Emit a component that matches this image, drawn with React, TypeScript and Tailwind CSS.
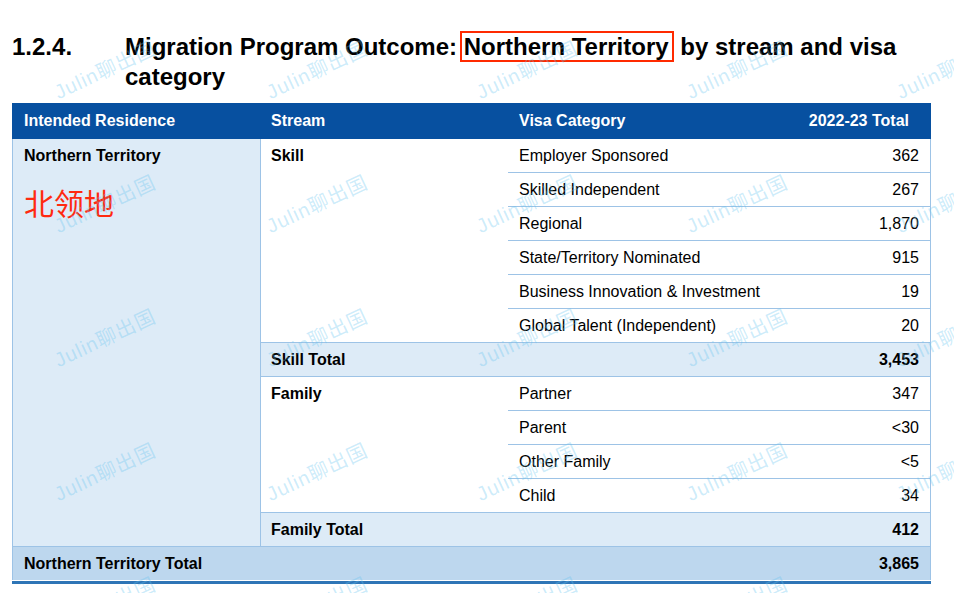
import React from "react";

const skillRows: [string, string][] = [
  ["Employer Sponsored", "362"],
  ["Skilled Independent", "267"],
  ["Regional", "1,870"],
  ["State/Territory Nominated", "915"],
  ["Business Innovation & Investment", "19"],
  ["Global Talent (Independent)", "20"],
];

const familyRows: [string, string][] = [
  ["Partner", "347"],
  ["Parent", "<30"],
  ["Other Family", "<5"],
  ["Child", "34"],
];

const marks = [70, 204, 338, 472, 606].flatMap((y) =>
  [105, 317, 527, 737, 947].map((x) => ({ x, y }))
);

const StreamGroup = ({ name, rows }: { name: string; rows: [string, string][] }) => (
  <div className="flex border-b border-[#9dc3e6]">
    <div className="w-[247px] shrink-0">
      <div className="h-[33px] flex items-center pl-[10px] font-bold">{name}</div>
    </div>
    <div className="flex-1 flex flex-col">
      {rows.map(([label, value]) => (
        <div
          key={label}
          className="h-[34px] last:h-[33px] flex items-center justify-between pl-[11px] pr-[11px] border-b last:border-b-0 border-[#9dc3e6]"
        >
          <span>{label}</span>
          <span>{value}</span>
        </div>
      ))}
    </div>
  </div>
);

const TotalRow = ({ label, value, last }: { label: string; value: string; last?: boolean }) => (
  <div
    className={
      last
        ? "h-[33px] flex items-center justify-between bg-[#ddebf7] pl-[10px] pr-[11px] font-bold"
        : "h-[34px] flex items-center justify-between bg-[#ddebf7] pl-[10px] pr-[11px] font-bold border-b border-[#9dc3e6]"
    }
  >
    <span>{label}</span>
    <span>{value}</span>
  </div>
);

export default function App() {
  return (
    <div className="relative w-[954px] h-[593px] overflow-hidden bg-white text-black font-['Liberation_Sans',Arial,sans-serif]">
      <div className="flex pt-[32px] text-[24px] leading-[30px] font-bold">
        <div className="w-[125px] shrink-0 pl-3">1.2.4.</div>
        <div className="flex-1 pr-[20px]">
          Migration Program Outcome:{" "}
          <span className="border-2 border-[#ff2a00] pl-[2px] pr-[3px] ml-[-4px]">Northern Territory</span>
          {" "}by stream and visa category
        </div>
      </div>

      <div className="ml-3 mt-[11px] w-[919px] text-[16px]">
        <div className="h-[36px] flex items-center bg-[#0750a0] text-white font-bold">
          <div className="w-[248px] pl-3">Intended Residence</div>
          <div className="w-[248px] pl-[11px]">Stream</div>
          <div className="flex-1 pl-[11px]">Visa Category</div>
          <div className="pr-[22px]">2022-23 Total</div>
        </div>

        <div className="flex border-l border-r border-b border-[#9dc3e6]">
          <div className="w-[248px] shrink-0 bg-[#ddebf7] border-r border-[#9dc3e6] pl-[11px]">
            <div className="h-[33px] flex items-center font-bold">Northern Territory</div>
            <div className="mt-[12px] text-[30px] leading-[36px] text-[#ff2a10] font-['Noto_Sans_CJK_SC',sans-serif]">
              北领地
            </div>
          </div>
          <div className="flex-1 flex flex-col">
            <StreamGroup name="Skill" rows={skillRows} />
            <TotalRow label="Skill Total" value="3,453" />
            <StreamGroup name="Family" rows={familyRows} />
            <TotalRow label="Family Total" value="412" last />
          </div>
        </div>

        <div className="h-[33px] flex items-center justify-between bg-[#bdd7ee] border-l border-r border-[#9dc3e6] pl-[11px] pr-[11px] font-bold">
          <span>Northern Territory Total</span>
          <span>3,865</span>
        </div>
        <div className="mt-px h-[3px] bg-[#2e75b6]" />
      </div>

      <div className="pointer-events-none absolute inset-0">
        {marks.map((m) => (
          <div
            key={`${m.x}-${m.y}`}
            className="absolute -translate-x-1/2 -translate-y-1/2 -rotate-[25deg] whitespace-nowrap text-[20px] tracking-[1px] text-[rgba(100,195,240,0.32)] font-['Liberation_Sans','Noto_Sans_CJK_SC',sans-serif]"
            style={{ left: m.x, top: m.y }}
          >
            Julin聊出国
          </div>
        ))}
      </div>
    </div>
  );
}
